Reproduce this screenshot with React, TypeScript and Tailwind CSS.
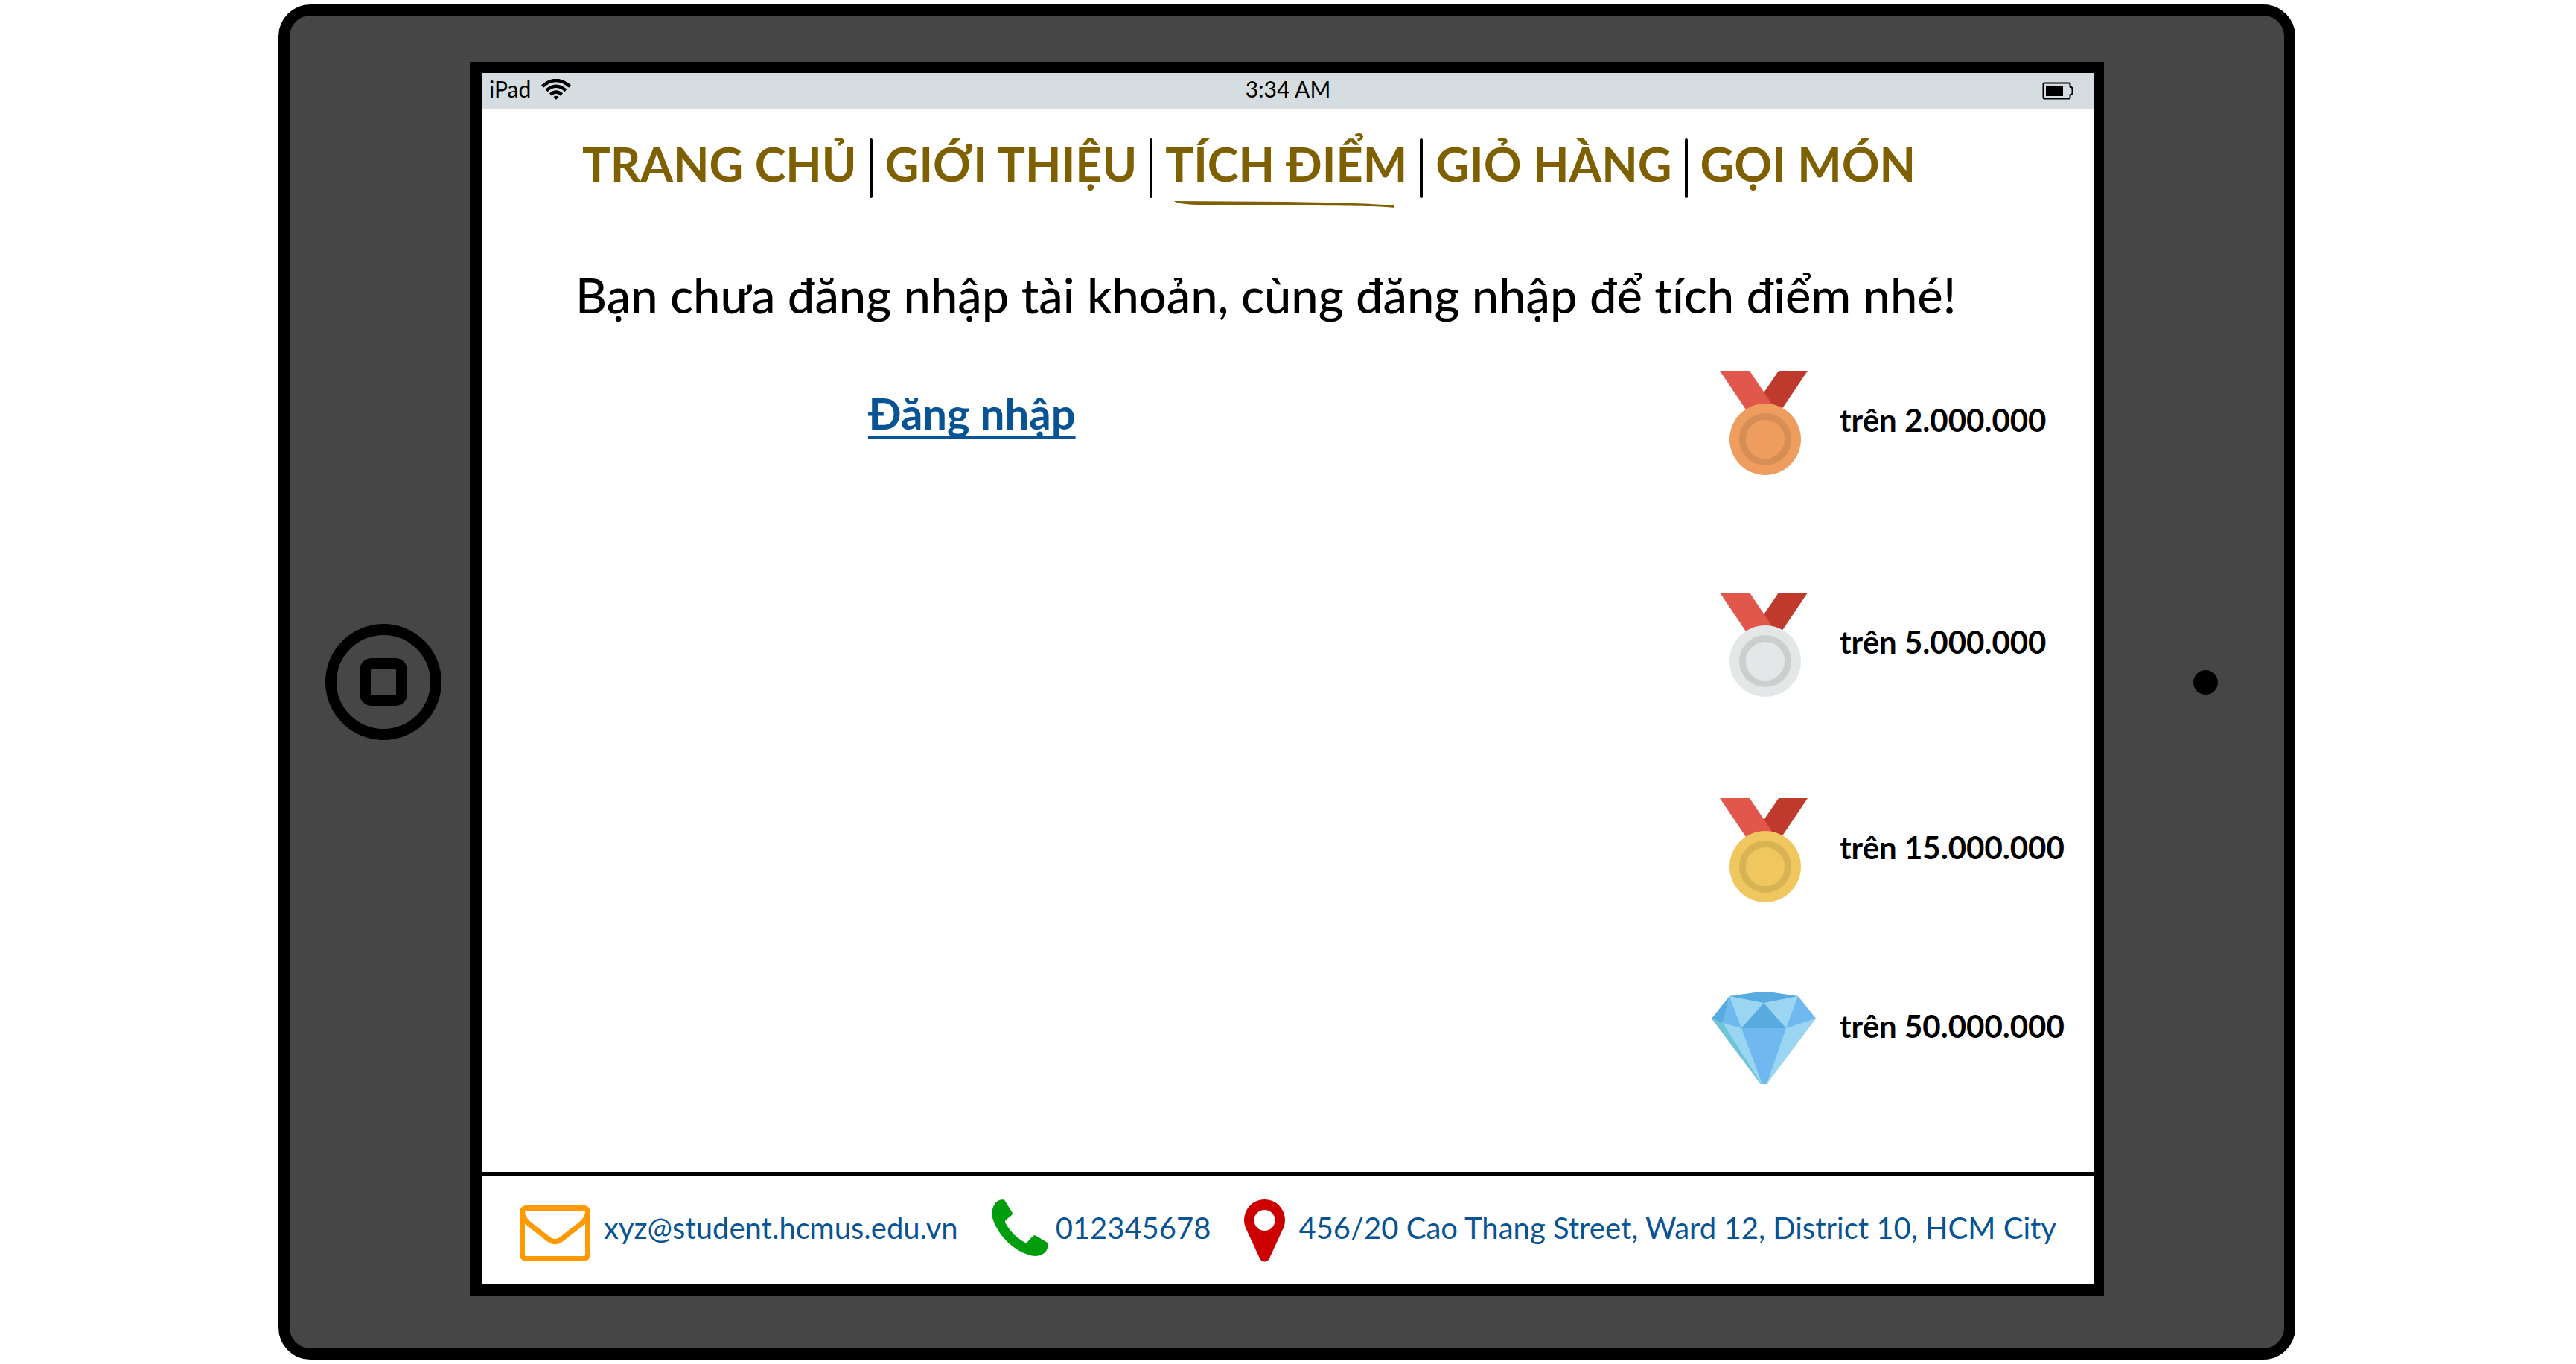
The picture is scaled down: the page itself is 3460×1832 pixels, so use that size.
type Tier = { label: string; icon: "medal" | "diamond"; face?: string; ring?: string; spacing: string };

const navItems = [
  { label: "TRANG CHỦ" },
  { label: "GIỚI THIỆU" },
  { label: "TÍCH ĐIỂM", active: true },
  { label: "GIỎ HÀNG" },
  { label: "GỌI MÓN" },
];

const tiers: Tier[] = [
  { label: "trên 2.000.000", icon: "medal", face: "#ee9d5e", ring: "#d68e55", spacing: "" },
  { label: "trên 5.000.000", icon: "medal", face: "#e3e7e7", ring: "#cdcfce", spacing: "mt-[154px]" },
  { label: "trên 15.000.000", icon: "medal", face: "#efc75e", ring: "#d7b354", spacing: "mt-[132px]" },
  { label: "trên 50.000.000", icon: "diamond", spacing: "mt-24" },
];

function Medal({ face, ring }: { face?: string; ring?: string }) {
  return (
    <svg viewBox="0 0 140 144" className="h-36 w-[140px] shrink-0" aria-hidden="true">
      <path d="M90 0H129L92 55L58 47Z" fill="#bf392c" />
      <path d="M11 0H51L86 52L48 55Z" fill="#e2574c" />
      <circle cx="72" cy="92" r="48" fill={face} />
      <circle cx="72" cy="92" r="30.5" fill="none" stroke={ring} strokeWidth="9" />
    </svg>
  );
}

function Diamond() {
  return (
    <svg viewBox="0 0 140 144" className="h-36 w-[140px] shrink-0" aria-hidden="true">
      <path d="M0 56L24 26L66 20H75L116 26L140 56L74 144H66Z" fill="#9ad6f2" />
      <path d="M24 26L66 20H75L116 26L70 35Z" fill="#58abde" />
      <path d="M70 35L40 69H100Z" fill="#58abde" />
      <path d="M24 26L0 56L15 62Z" fill="#58abde" />
      <path d="M24 26L15 62L40 69Z" fill="#70b9f0" />
      <path d="M116 26L100 69L140 56Z" fill="#70b9f0" />
      <path d="M40 69H100L74 144H68Z" fill="#70b9f0" />
      <path d="M0 56L15 62L67 144H66Z" fill="#6fc4d9" />
    </svg>
  );
}

function Wifi() {
  return (
    <svg viewBox="0 0 40 28" className="h-7 w-10" fill="none" stroke="#000" strokeWidth="4.5" aria-hidden="true">
      <path d="M1.5 10Q20 -6 38.5 10" />
      <path d="M7 15.5Q20 4 33 15.5" />
      <path d="M12.5 21Q20 14 27.5 21" />
      <path d="M16.5 24Q20 21.5 23.5 24L20 28Z" fill="#000" stroke="none" />
    </svg>
  );
}

function Battery() {
  return (
    <svg viewBox="0 0 42 24" className="h-6 w-[42px]" aria-hidden="true">
      <path d="M3 1.5H36Q37.500 1.500 37.500 3V6.500Q40.500 7 40.500 9V15Q40.500 17 37.500 17.500V21Q37.500 22.500 36 22.500H3Q1.500 22.500 1.500 21V3Q1.500 1.500 3 1.500Z" fill="none" stroke="#000" strokeWidth="2" />
      <rect x="5" y="5" width="23" height="14" />
    </svg>
  );
}

function Envelope() {
  return (
    <svg viewBox="0 0 95 84" className="h-[84px] w-[95px] shrink-0" fill="none" stroke="#ff9900" strokeWidth="7" aria-hidden="true">
      <rect x="3.5" y="11.5" width="88" height="68" rx="5" />
      <path d="M3.500 16C3.500 25 9 30 14 34L39 53.500Q47.500 60 56 53.500L81 34C86 30 91.500 25 91.500 16" />
    </svg>
  );
}

function Phone() {
  return (
    <svg viewBox="0 0 76 84" className="h-[84px] w-[76px] shrink-0" fill="#009e0f" aria-hidden="true">
      <path d="M17 .5L27.500 17.500Q28.500 19.500 27 21L19 27.500Q17 29.500 18.500 31.500C24 42 34 52 44 57.500Q46.500 59 48 57L55 49.500Q57 47.500 59 48.500L74 57.500Q76 58.500 75.800 61C75 70 70 73 66 74.500C60 77 54 76 46 73C22 64 4 40 .5 22C-.5 12 4 4 9 1.500C12 .3 14 0 17 .5Z" />
    </svg>
  );
}

function Pin() {
  return (
    <svg viewBox="0 0 55 84" className="h-[84px] w-[55px] shrink-0" fill="#cc0000" aria-hidden="true">
      <path fillRule="evenodd" d="M27.500 0A27.500 27.500 0 0 1 55 27.500C55 32 54 36 52.500 39L34 79Q31.500 83.500 27.500 83.500Q23.500 83.500 21 79L2.500 39C1 36 0 32 0 27.500A27.500 27.500 0 0 1 27.500 0ZM27.500 14A14 14 0 1 0 27.500 42A14 14 0 1 0 27.500 14Z" />
    </svg>
  );
}

function StatusBar() {
  return (
    <div className="grid h-12 grid-cols-[1fr_auto_1fr] bg-[#d6dde0] text-[30px] leading-[42px]">
      <div className="flex gap-3.5 pl-2.5">
        <span>iPad</span>
        <span className="pt-2">
          <Wifi />
        </span>
      </div>
      <span>3:34 AM</span>
      <span className="justify-self-end pt-3 pr-7">
        <Battery />
      </span>
    </div>
  );
}

function Nav() {
  return (
    <nav className="mt-10 pl-[135px]">
      <ul className="flex text-[63px] leading-[68px] font-bold whitespace-nowrap text-[#7f6000]">
        {navItems.map((item, i) => (
          <li key={item.label} className="flex">
            {i > 0 && <span className="mx-[17px] h-20 w-1 rounded-full bg-black" />}
            <a href="#" className="relative" aria-current={item.active ? "page" : undefined}>
              {item.label}
              {item.active && (
                <svg viewBox="0 0 296 9" className="absolute top-[84px] left-3 h-[9px] w-[296px]" fill="#7f6000" aria-hidden="true">
                  <path d="M0 0L150 1C220 2 280 4 296 6V9C285 7 250 6.500 180 6L30 5Q4 4 0 0Z" />
                </svg>
              )}
            </a>
          </li>
        ))}
      </ul>
    </nav>
  );
}

export default function App() {
  return (
    <div className="flex min-h-screen bg-white pt-1.5 pr-[377px] pb-1.5 pl-[374px] font-['Lato','Noto_Sans',sans-serif] text-black [font-variant-ligatures:none]">
      <div className="flex flex-1 items-stretch rounded-[43px] border-[15px] border-black bg-[#464646]">
        <div className="flex w-[242px] shrink-0 items-center pl-12">
          <button type="button" aria-label="Home" className="flex size-[156px] items-center justify-center rounded-full border-[15px] border-black">
            <span className="size-16 rounded-2xl border-[15px] border-black" />
          </button>
        </div>

        <div className="mt-[62px] mb-[71px] flex min-w-0 flex-1 flex-col border-[15px] border-r-[13px] border-l-[16px] border-black bg-white">
          <StatusBar />
          <Nav />
          <main className="flex-1">
            <h1 className="mt-[89px] pl-[126px] text-[65px] leading-[82px] font-medium whitespace-nowrap">
              Bạn chưa đăng nhập tài khoản, cùng đăng nhập để tích điểm nhé!
            </h1>
            <div className="flex items-start justify-between pr-9 pl-[519px]">
              <a
                href="#"
                className="mt-[78px] text-[58px] leading-[80px] font-bold text-[#085394] underline decoration-4 underline-offset-8 [text-decoration-skip-ink:none]"
              >
                Đăng nhập
              </a>
              <ul className="mt-[61px] w-[478px]">
                {tiers.map((tier) => (
                  <li key={tier.label} className={"flex items-start gap-8 " + tier.spacing}>
                    {tier.icon === "medal" ? <Medal face={tier.face} ring={tier.ring} /> : <Diamond />}
                    <span className="text-[42px] leading-[132px] font-bold whitespace-nowrap">{tier.label}</span>
                  </li>
                ))}
              </ul>
            </div>
          </main>
          <footer className="flex h-[151px] items-center border-t-[6px] border-black pl-[51px] text-[40px] leading-[50px] whitespace-nowrap text-[#085394]">
            <a href="mailto:xyz@student.hcmus.edu.vn" className="flex items-center gap-[18px]">
              <Envelope />
              <span className="pb-2">xyz@student.hcmus.edu.vn</span>
            </a>
            <a href="tel:012345678" className="ml-[45px] flex items-center gap-2.5">
              <Phone />
              <span className="pb-2">012345678</span>
            </a>
            <a href="#" className="ml-[45px] flex items-center gap-[18px]">
              <Pin />
              <span className="pb-2">456/20 Cao Thang Street, Ward 12, District 10, HCM City</span>
            </a>
          </footer>
        </div>

        <div className="flex w-[242px] shrink-0 items-center pl-[120px]">
          <span className="size-[33px] rounded-full bg-black" />
        </div>
      </div>
    </div>
  );
}
